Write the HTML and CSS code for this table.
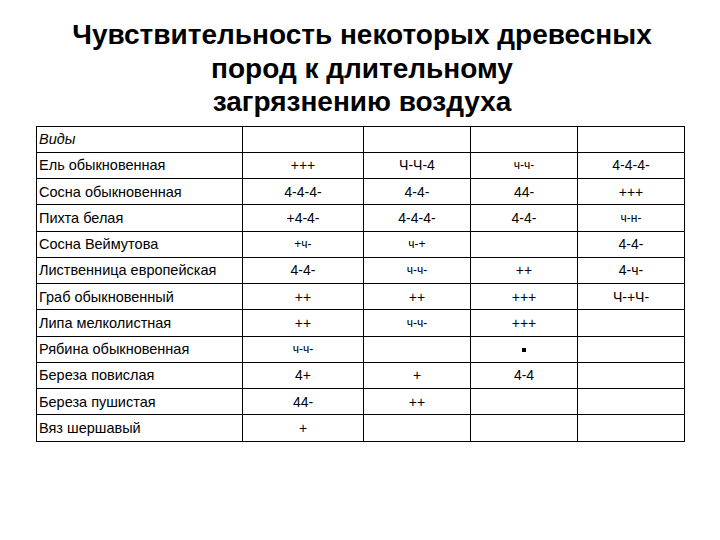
FILE: index.html
```html
<!DOCTYPE html>
<html lang="ru">
<head>
<meta charset="utf-8">
<link rel="stylesheet" href="styles.css">
</head>
<body>
<h1 class="title">Чувствительность некоторых древесных<br>пород к длительному<br>загрязнению воздуха</h1>
<table class="grid">
<colgroup><col class="c1"><col class="c2"><col class="c3"><col class="c3"><col class="c3"></colgroup>
<tr><td class="name head">Виды</td><td></td><td></td><td></td><td></td></tr>
<tr><td class="name">Ель обыкновенная</td><td>+++</td><td>Ч-Ч-4</td><td class="sm">ч-ч-</td><td>4-4-4-</td></tr>
<tr><td class="name">Сосна обыкновенная</td><td>4-4-4-</td><td>4-4-</td><td>44-</td><td>+++</td></tr>
<tr><td class="name">Пихта белая</td><td>+4-4-</td><td>4-4-4-</td><td>4-4-</td><td class="sm">ч-н-</td></tr>
<tr><td class="name">Сосна Веймутова</td><td class="sm">+ч-</td><td class="sm">ч-+</td><td></td><td>4-4-</td></tr>
<tr><td class="name">Лиственница европейская</td><td>4-4-</td><td class="sm">ч-ч-</td><td>++</td><td>4-ч-</td></tr>
<tr><td class="name">Граб обыкновенный</td><td>++</td><td>++</td><td>+++</td><td>Ч-+Ч-</td></tr>
<tr><td class="name">Липа мелколистная</td><td>++</td><td class="sm">ч-ч-</td><td>+++</td><td></td></tr>
<tr><td class="name">Рябина обыкновенная</td><td class="sm">ч-ч-</td><td></td><td><span class="dot"></span></td><td></td></tr>
<tr><td class="name">Береза повислая</td><td>4+</td><td>+</td><td>4-4</td><td></td></tr>
<tr><td class="name">Береза пушистая</td><td>44-</td><td>++</td><td></td><td></td></tr>
<tr><td class="name">Вяз шершавый</td><td>+</td><td></td><td></td><td></td></tr>
</table>
</body>
</html>
```
FILE: styles.css
```css
html, body {
  margin: 0;
  padding: 0;
  background: #ffffff;
}
body {
  width: 720px;
  height: 540px;
  font-family: "Liberation Sans", Arial, sans-serif;
  color: #000;
}
.title {
  margin: 0;
  padding-top: 18px;
  font-size: 28px;
  font-weight: bold;
  line-height: 33.5px;
  text-align: center;
  padding-left: 4px;
}
.grid {
  margin-top: 7px;
  margin-left: 36px;
  width: 649px;
  border-collapse: collapse;
  table-layout: fixed;
  font-size: 14px;
}
.c1 { width: 206px; }
.c2 { width: 121px; }
.c3 { width: 107px; }
.grid tr { height: 26.25px; }
.grid td {
  border: 1.3px solid #000;
  padding: 0 3px;
  text-align: center;
  vertical-align: middle;
  white-space: nowrap;
}
.grid td.name {
  text-align: left;
  font-size: 14.5px;
  padding-left: 2px;
}
.grid td.head {
  font-style: italic;
}
.grid td.sm {
  font-size: 12px;
}
.dot {
  display: inline-block;
  width: 4px;
  height: 4px;
  background: #000;
  vertical-align: middle;
}
```
